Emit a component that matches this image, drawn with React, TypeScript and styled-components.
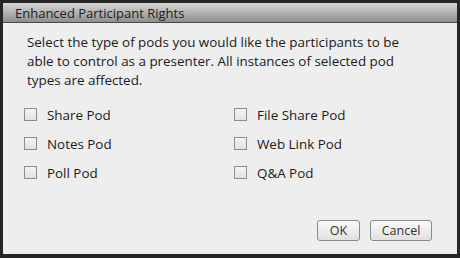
import React from "react";
import styled, { createGlobalStyle } from "styled-components";

const GlobalStyle = createGlobalStyle`
  html, body {
    margin: 0;
    padding: 0;
    background: #1e1e1e;
  }
  body {
    font-family: "Open Sans", "Liberation Sans", sans-serif;
  }
`;

const Dialog = styled.div`
  width: 460px;
  height: 258px;
  box-sizing: border-box;
  border: 3px solid #262626;
  border-bottom-width: 4px;
  background: #eeeeee;
  display: flex;
  flex-direction: column;
`;

const TitleBar = styled.div`
  height: 20px;
  box-sizing: border-box;
  border-bottom: 1px solid #4a4a4a;
  background: linear-gradient(#d6d6d6, #8e8e8e);
  padding-left: 12px;
  display: flex;
  align-items: center;
  font-size: 13px;
  color: #1c1c1c;
`;

const Body = styled.div`
  flex: 1;
  display: flex;
  flex-direction: column;
  padding: 10px 24px 0 21px;
`;

const Intro = styled.p`
  margin: 0;
  padding-left: 3px;
  font-size: 13.4px;
  line-height: 19px;
  color: #1a1a1a;
  width: 395px;
`;

const Grid = styled.div`
  display: grid;
  grid-template-columns: 210px 1fr;
  row-gap: 10px;
  margin-top: 15px;
`;

const Option = styled.label`
  display: flex;
  align-items: center;
  height: 19px;
  font-size: 13.4px;
  color: #1a1a1a;
`;

const Box = styled.span`
  width: 11px;
  height: 11px;
  border: 1px solid #8c8c8c;
  background: linear-gradient(#f4f4f4, #e2e2e2);
  margin-right: 10px;
  flex-shrink: 0;
`;

const Footer = styled.div`
  margin-top: auto;
  display: flex;
  justify-content: flex-end;
  gap: 10px;
  padding: 0 25px 13px 0;
`;

const Button = styled.button<{ $w: number }>`
  width: ${(p) => p.$w}px;
  height: 21px;
  border: 1px solid #8a8a8a;
  border-radius: 3px;
  background: linear-gradient(#fafafa, #e0e0e0);
  font-family: "Open Sans", "Liberation Sans", sans-serif;
  font-size: 12.5px;
  color: #333;
  padding: 0;
`;

const pods = [
  "Share Pod",
  "File Share Pod",
  "Notes Pod",
  "Web Link Pod",
  "Poll Pod",
  "Q&A Pod",
];

export default function App() {
  return (
    <>
      <GlobalStyle />
      <Dialog>
        <TitleBar>Enhanced Participant Rights</TitleBar>
        <Body>
          <Intro>
            Select the type of pods you would like the participants to be able
            to control as a presenter. All instances of selected pod types are
            affected.
          </Intro>
          <Grid>
            {pods.map((p) => (
              <Option key={p}>
                <Box />
                {p}
              </Option>
            ))}
          </Grid>
        </Body>
        <Footer>
          <Button $w={43}>OK</Button>
          <Button $w={62}>Cancel</Button>
        </Footer>
      </Dialog>
    </>
  );
}
